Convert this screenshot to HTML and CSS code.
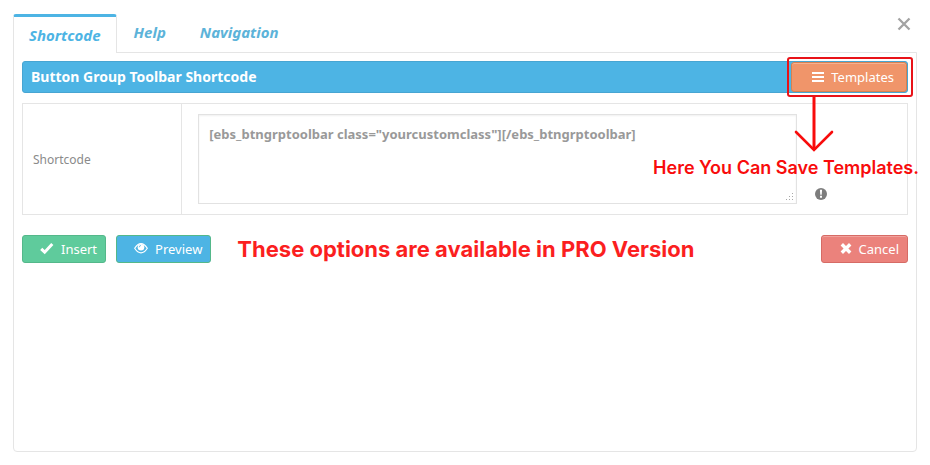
FILE: index.html
```html
<!DOCTYPE html>
<html lang="en">
<head>
<meta charset="utf-8">
<meta name="viewport" content="width=device-width, initial-scale=1">
<title>Button Group Toolbar Shortcode</title>
<link rel="stylesheet" href="styles.css">
</head>
<body>
<main class="dialog">
  <header class="dialog-head">
    <nav class="tabs">
      <a class="tab active" href="#shortcode">Shortcode</a>
      <a class="tab" href="#help">Help</a>
      <a class="tab" href="#navigation">Navigation</a>
    </nav>
    <button class="close" type="button" aria-label="Close">
      <svg width="14" height="14" viewBox="0 0 14 14"><path d="M1.500 1.500l11 11M12.500 1.500l-11 11" stroke="#a3a3a3" stroke-width="2.300" fill="none"/></svg>
    </button>
  </header>
  <section class="panel" id="shortcode">
    <div class="title-bar">
      <h1>Button Group Toolbar Shortcode</h1>
      <div class="templates">
        <button class="btn orange" type="button">
          <svg width="12" height="12" viewBox="0 0 12 12"><path d="M0 2h12M0 6h12M0 10h12" stroke="#fff" stroke-width="2"/></svg>
          Templates
        </button>
        <div class="highlight"></div>
        <svg class="arrow" width="40" height="56" viewBox="0 0 40 56"><path d="M20 0v53" stroke="#f80c0c" stroke-width="3" fill="none"/><path d="M2 35l18 18 18-18" stroke="#f80c0c" stroke-width="2.600" fill="none" stroke-linecap="round"/></svg>
        <p class="note">Here You Can Save Templates.</p>
      </div>
    </div>
    <table class="fields">
      <tr>
        <th scope="row"><label for="code">Shortcode</label></th>
        <td>
          <div class="row">
            <div class="field">
              <textarea id="code" spellcheck="false">[ebs_btngrptoolbar class="yourcustomclass"][/ebs_btngrptoolbar]</textarea>
              <svg class="grip" width="8" height="8" viewBox="0 0 8 8"><path d="M6 0h1v1h-1zM6 3h1v1h-1zM3 3h1v1h-1zM6 6h1v1h-1zM3 6h1v1h-1zM0 6h1v1h-1z" fill="#a8a8a8"/></svg>
            </div>
            <svg class="info" width="12" height="12" viewBox="0 0 12 12"><circle cx="6" cy="6" r="6" fill="#7d7d7d"/><path d="M4.900 1.800h2.200l-.4 5H5.300zM5 7.800h2v2H5z" fill="#fff"/></svg>
          </div>
        </td>
      </tr>
    </table>
    <div class="actions">
      <button class="btn green" type="button">
        <svg width="14" height="12" viewBox="0 0 14 12"><path d="M1.200 5.800l3.500 3.400L12.300 1" stroke="#fff" stroke-width="3" fill="none"/></svg>
        Insert
      </button>
      <button class="btn blue" type="button">
        <svg width="14" height="12" viewBox="0 0 14 12"><path d="M.7 5.200C3.200 1.300 5 .6 7 .6s3.800.7 6.300 4.600C11 8.800 9 9.800 7 9.800S3 8.800.7 5.200z" stroke="#fff" stroke-width="1.200" fill="none"/><circle cx="7" cy="4.300" r="3.300" fill="#fff"/><path d="M5.200 4.300A1.800 1.800 0 0 1 7 2.500" stroke="#4db4e4" stroke-width=".8" fill="none"/></svg>
        Preview
      </button>
      <p class="pro">These options are available in PRO Version</p>
      <button class="btn red" type="button">
        <svg width="12" height="12" viewBox="0 0 12 12"><path d="M1.800 1.300l8.400 8.400M10.200 1.300L1.800 9.700" stroke="#fff" stroke-width="3.400" fill="none"/></svg>
        Cancel
      </button>
    </div>
  </section>
</main>
</body>
</html>
```
FILE: styles.css
```css
* { box-sizing: border-box; }
body {
  margin: 0;
  background: #fff;
  color: #8a8a8a;
  font-family: "Noto Sans", "Open Sans", sans-serif;
  font-size: 13px;
}
h1, p { margin: 0; }
.dialog {
  display: flex;
  flex-direction: column;
  min-height: 100vh;
  padding: 14px 13px 13px;
}
.dialog-head {
  display: flex;
  justify-content: space-between;
  align-items: flex-start;
}
.tabs { display: flex; align-items: flex-start; }
.tab {
  padding: 7px 17px;
  color: #5cb3d9;
  font: italic bold 15px/22px "Noto Sans", sans-serif;
  text-decoration: none;
}
.tab.active {
  position: relative;
  z-index: 1;
  margin-bottom: -1px;
  padding: 7px 15px;
  border: 1px solid #e5e5e5;
  border-top: 3px solid #4db4e4;
  border-bottom: 0;
  border-radius: 3px 3px 0 0;
  background: #fff;
  color: #4db4e4;
}
.close {
  display: flex;
  margin: 3px 6px 0 0;
  padding: 0;
  border: 0;
  background: none;
}
.panel {
  flex: 1;
  padding: 8px;
  border: 1px solid #e5e5e5;
  border-radius: 0 0 4px 4px;
}
.title-bar {
  display: flex;
  justify-content: space-between;
  align-items: center;
  height: 32px;
  padding-left: 8px;
  border: 1px solid #47a5d2;
  border-radius: 3px;
  background: #4db4e4;
}
.title-bar h1 {
  color: #fff;
  font-size: 14px;
  line-height: 20px;
}
.templates { position: relative; z-index: 2; }
.btn {
  display: flex;
  align-items: center;
  gap: 7px;
  height: 28px;
  padding: 0 8px 0 17px;
  border: 1px solid;
  border-radius: 3px;
  color: #fff;
  font: 13px/18px "Noto Sans", sans-serif;
  white-space: nowrap;
}
.orange {
  height: 30px;
  padding: 0 12px 0 20px;
  border-color: #d8804f;
  background: #f0956a;
  box-shadow: inset 0 1px #f6b191;
}
.green { border-color: #54b88a; background: #5fcb9c; }
.blue { border-color: #54b88a; background: #4db4e4; }
.red {
  margin-left: auto;
  padding-left: 18px;
  border-color: #d66b65;
  background: #eb827c;
  box-shadow: inset 0 1px #f1a19c;
}
.highlight {
  position: absolute;
  inset: -5px -6px -5px -4px;
  border: 2px solid #e81218;
  border-radius: 3px;
}
.arrow { position: absolute; top: 35px; right: 73px; }
.note {
  position: absolute;
  top: 94px;
  right: -12px;
  color: #f80c0c;
  font: 600 18px/24px Inter, sans-serif;
  white-space: nowrap;
}
.fields {
  width: 100%;
  margin: 10px 0 20px;
  border-collapse: collapse;
}
.fields th, .fields td { border: 1px solid #e5e5e5; }
.fields th {
  width: 18%;
  padding: 0 10px;
  font-weight: 400;
  font-size: 12px;
  text-align: left;
}
.fields td { padding: 10px 16px; }
.row {
  display: flex;
  align-items: flex-end;
  gap: 18px;
  padding-right: 64px;
}
.field { position: relative; flex: 1; }
.field textarea {
  display: block;
  width: 100%;
  height: 90px;
  padding: 9px 10px;
  border: 1px solid #e2e2e2;
  border-radius: 0;
  background: #fff;
  box-shadow: inset 0 1px 2px #f0f0f0;
  color: #999;
  font: bold 13px/20px "Noto Sans", sans-serif;
  resize: none;
}
.grip { position: absolute; right: 3px; bottom: 3px; }
.info { margin-bottom: 4px; }
.actions { display: flex; align-items: center; }
.blue { margin-left: 10px; }
.pro {
  margin-left: 26px;
  color: #fb1f1f;
  font: 700 22px/28px Inter, sans-serif;
}
```
